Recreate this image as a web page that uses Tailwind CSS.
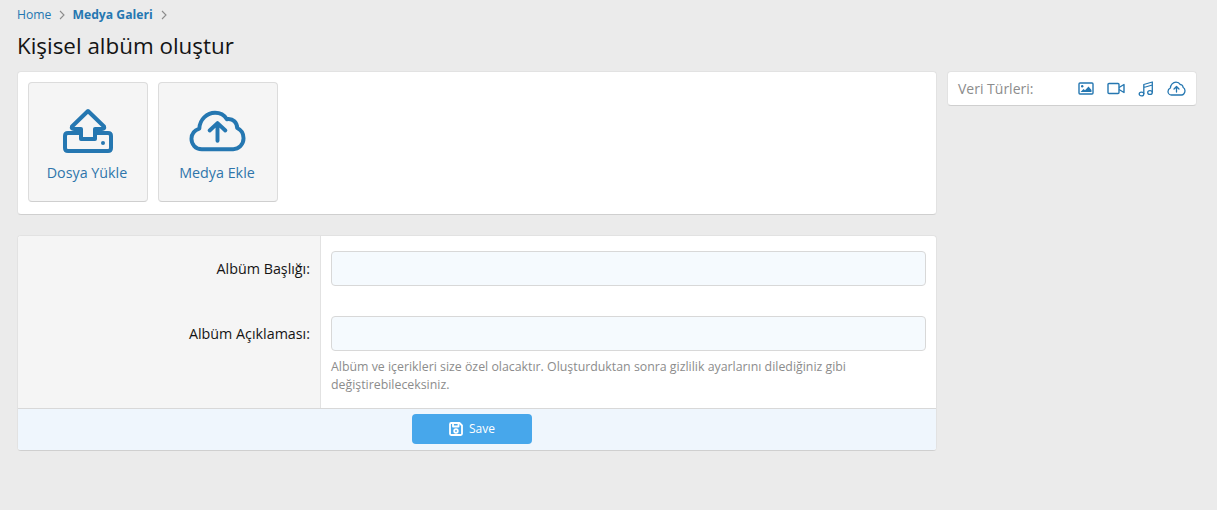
<!DOCTYPE html>
<html lang="tr">
<head>
    <meta charset="UTF-8">
    <title>Kişisel albüm oluştur</title>
    <script src="https://cdn.jsdelivr.net/npm/@tailwindcss/browser@4"></script>
</head>
<body class="bg-[#ebebeb] min-h-screen font-['Open_Sans',sans-serif] text-[13px] text-[#141414]">
    <div class="pl-[17px] pr-[20px]">
        <!-- Breadcrumb -->
        <div class="flex items-center h-[30px] text-[12.2px]">
            <span class="text-[#2577b1]">Home</span>
            <svg class="w-[8px] h-[10px] ml-[7px] mr-[6px]" viewBox="0 0 8 10" fill="none" stroke="#8c8c8c" stroke-width="1.1"><path d="M2 1l4 4-4 4"/></svg>
            <span class="text-[#2577b1] font-bold">Medya Galeri</span>
            <svg class="w-[8px] h-[10px] ml-[7px]" viewBox="0 0 8 10" fill="none" stroke="#8c8c8c" stroke-width="1.1"><path d="M2 1l4 4-4 4"/></svg>
        </div>
        <h1 class="text-[22.4px] leading-[32px] h-[41px] font-normal">Kişisel albüm oluştur</h1>

        <div class="flex gap-[10px] items-start">
            <!-- Main column -->
            <div class="w-[920px]">
                <div class="bg-white rounded-[4px] border border-[#e2e2e2] border-b-[#cfcfcf] p-[10px] flex gap-[10px] h-[144px]">
                    <div class="w-[120px] h-[120px] bg-[#f5f5f5] rounded-[4px] border border-[#dcdcdc] border-b-[#cfcfcf] flex flex-col items-center text-[#2f75ab] text-[14.3px]">
                        <svg class="mt-[25px] w-[52px] h-[46px]" viewBox="0 0 52 46" fill="none" stroke="#2577b1" stroke-width="4" stroke-linejoin="round" stroke-linecap="round">
                            <path d="M26 3L10 18.5Q9 21 12 21H19V31H33V21H40Q43 21 42 18.5Z"/>
                            <path d="M19 25H6Q3 25 3 28V40Q3 43 6 43H46Q49 43 49 40V28Q49 25 46 25H33"/>
                            <circle cx="41" cy="35" r="2" fill="#2577b1" stroke="none"/>
                        </svg>
                        <span class="mt-[9px] leading-[20px] -translate-x-[1px]">Dosya Yükle</span>
                    </div>
                    <div class="w-[120px] h-[120px] bg-[#f5f5f5] rounded-[4px] border border-[#dcdcdc] border-b-[#cfcfcf] flex flex-col items-center text-[#2f75ab] text-[14.3px]">
                        <svg class="mt-[27px] w-[57px] h-[42px] -translate-x-[1px]" viewBox="0 0 58 42" fill="none" stroke="#2577b1" stroke-width="4" stroke-linejoin="round" stroke-linecap="round">
                            <path d="M13 39.5C6.5 39.5 2.5 34.5 2.5 29C2.5 23.5 6 20 10.5 18.5C11 9 18.5 2.5 26.5 2.5C32 2.5 36 5 38.5 9C45 8 49 12.5 49 18C53.5 20 55.5 24.5 55.5 28.5C55.5 35 50.5 39.5 45 39.5Z"/>
                            <path d="M29 31V13M21 20.5L29 13L37 20.5"/>
                        </svg>
                        <span class="mt-[11px] leading-[20px] -translate-x-[1px]">Medya Ekle</span>
                    </div>
                </div>

                <!-- Form -->
                <div class="mt-[20px] bg-white rounded-[4px] border border-[#e2e2e2] border-b-[#cfcfcf] overflow-hidden">
                    <div class="grid grid-cols-[303px_1fr] h-[172px]">
                        <div class="bg-[#f5f5f5] border-r border-[#e2e2e2] text-right pr-[10px] text-[14.3px]">
                            <div class="pt-[23px] leading-[20px]">Albüm Başlığı:</div>
                            <div class="pt-[45px] leading-[20px]">Albüm Açıklaması:</div>
                        </div>
                        <div class="pl-[10px] pr-[10px] pt-[15px]">
                            <input type="text" class="block w-full h-[35px] bg-[#f5fafe] border border-[#d8d8d8] rounded-[4px]">
                            <input type="text" class="block w-full h-[35px] mt-[30px] bg-[#f5fafe] border border-[#d8d8d8] rounded-[4px]">
                            <p class="mt-[7px] text-[12.35px] leading-[18px] text-[#8c8c8c]">Albüm ve içerikleri size özel olacaktır. Oluşturduktan sonra gizlilik ayarlarını dilediğiniz gibi değiştirebileceksiniz.</p>
                        </div>
                    </div>
                    <div class="h-[42px] bg-[#eff6fd] border-t border-[#d8d8d8] flex justify-center pt-[5px]">
                        <button class="w-[120px] h-[30px] mr-[10px] rounded-[4px] bg-[#47a7eb] text-white text-[12px] flex items-center justify-center gap-[6px]">
                            <svg class="w-[14px] h-[14px]" viewBox="0 0 14 14" fill="none" stroke="#fff" stroke-width="1.8" stroke-linejoin="round">
                                <path d="M1 2.2Q1 1 2.2 1H10.5L13 3.5V11.8Q13 13 11.8 13H2.2Q1 13 1 11.8Z"/>
                                <path d="M4 1V4.5H9.5V1"/>
                                <circle cx="7" cy="9" r="1.8"/>
                            </svg>
                            Save
                        </button>
                    </div>
                </div>
            </div>

            <!-- Sidebar -->
            <div class="w-[250px] h-[35px] bg-white rounded-[4px] border border-[#e2e2e2] border-b-[#cfcfcf] flex items-center pl-[10px] pr-[10px]">
                <span class="text-[14px] text-[#8c8c8c] flex-1">Veri Türleri:</span>
                <div class="flex items-center gap-[13px]">
                    <svg class="w-[16px] h-[13px]" viewBox="0 0 16 13" fill="none" stroke="#2577b1" stroke-width="1.4">
                        <rect x="1" y="1" width="14" height="11" rx="1"/>
                        <circle cx="4.2" cy="4.2" r="1.2" fill="#2577b1" stroke="none"/>
                        <path d="M2.5 10L5.5 7L7 8.3L10.5 4.5L13.5 8V10Z" fill="#2577b1" stroke="none"/>
                    </svg>
                    <svg class="w-[18px] h-[13px]" viewBox="0 0 18 13" fill="none" stroke="#2577b1" stroke-width="1.4" stroke-linejoin="round">
                        <rect x="1" y="1.5" width="11" height="10" rx="1"/>
                        <path d="M12 5.5L17 2.5V10.5L12 7.5"/>
                    </svg>
                    <svg class="w-[16px] h-[16px]" viewBox="0 0 16 16" fill="none" stroke="#2577b1" stroke-width="1.3" stroke-linejoin="round">
                        <ellipse cx="3.5" cy="13" rx="2.3" ry="1.9"/>
                        <ellipse cx="12" cy="11.5" rx="2.3" ry="1.9"/>
                        <path d="M5.8 13V3.5L14.3 1V11.5M5.8 6.5L14.3 4"/>
                    </svg>
                    <svg class="w-[19px] h-[15px]" viewBox="0 0 19 15" fill="none" stroke="#2577b1" stroke-width="1.3" stroke-linejoin="round" stroke-linecap="round">
                        <path d="M4.5 14C2.5 14 1 12.3 1 10.4C1 8.8 2 7.6 3.4 7C3.5 3.8 6 1.2 9 1.2C11 1.2 12.5 2.2 13.4 3.6C15 3.4 16 4.8 16 6.3C17.3 7 18 8.3 18 9.8C18 12 16.3 14 14.5 14Z"/>
                        <path d="M9.5 11V5.5M7 8L9.5 5.5L12 8"/>
                    </svg>
                </div>
            </div>
        </div>
    </div>
</body>
</html>
